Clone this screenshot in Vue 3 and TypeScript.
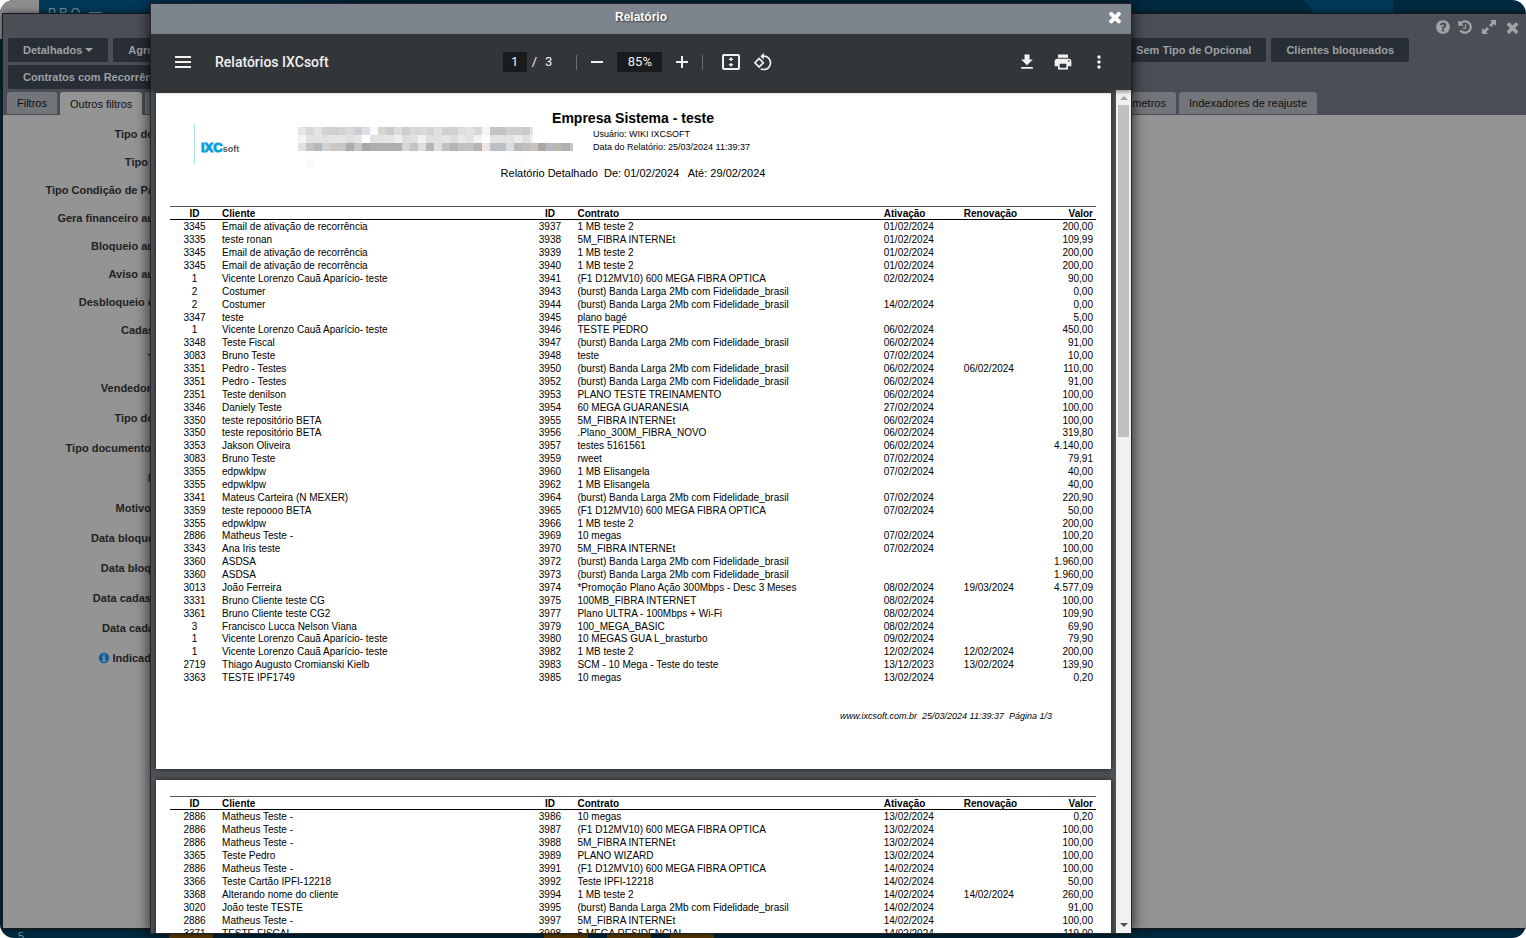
<script setup lang="ts">
type Row = [string, string, string, string, string, string, string]

const columns = ['ID', 'Cliente', 'ID', 'Contrato', 'Ativação', 'Renovação', 'Valor']

const burst = '(burst) Banda Larga 2Mb com Fidelidade_brasil'
const mega = '(F1 D12MV10) 600 MEGA FIBRA OPTICA'
const vicente = 'Vicente Lorenzo Cauã Aparício- teste'
const email = 'Email de ativação de recorrência'

const firstPage: Row[] = [
  ['3345', email, '3937', '1 MB teste 2', '01/02/2024', '', '200,00'],
  ['3335', 'teste ronan', '3938', '5M_FIBRA INTERNEt', '01/02/2024', '', '109,99'],
  ['3345', email, '3939', '1 MB teste 2', '01/02/2024', '', '200,00'],
  ['3345', email, '3940', '1 MB teste 2', '01/02/2024', '', '200,00'],
  ['1', vicente, '3941', mega, '02/02/2024', '', '90,00'],
  ['2', 'Costumer', '3943', burst, '', '', '0,00'],
  ['2', 'Costumer', '3944', burst, '14/02/2024', '', '0,00'],
  ['3347', 'teste', '3945', 'plano bagé', '', '', '5,00'],
  ['1', vicente, '3946', 'TESTE PEDRO', '06/02/2024', '', '450,00'],
  ['3348', 'Teste Fiscal', '3947', burst, '06/02/2024', '', '91,00'],
  ['3083', 'Bruno Teste', '3948', 'teste', '07/02/2024', '', '10,00'],
  ['3351', 'Pedro - Testes', '3950', burst, '06/02/2024', '06/02/2024', '110,00'],
  ['3351', 'Pedro - Testes', '3952', burst, '06/02/2024', '', '91,00'],
  ['2351', 'Teste denilson', '3953', 'PLANO TESTE TREINAMENTO', '06/02/2024', '', '100,00'],
  ['3346', 'Daniely Teste', '3954', '60 MEGA GUARANÉSIA', '27/02/2024', '', '100,00'],
  ['3350', 'teste repositório BETA', '3955', '5M_FIBRA INTERNEt', '06/02/2024', '', '100,00'],
  ['3350', 'teste repositório BETA', '3956', '.Plano_300M_FIBRA_NOVO', '06/02/2024', '', '319,80'],
  ['3353', 'Jakson Oliveira', '3957', 'testes 5161561', '06/02/2024', '', '4.140,00'],
  ['3083', 'Bruno Teste', '3959', 'rweet', '07/02/2024', '', '79,91'],
  ['3355', 'edpwklpw', '3960', '1 MB Elisangela', '07/02/2024', '', '40,00'],
  ['3355', 'edpwklpw', '3962', '1 MB Elisangela', '', '', '40,00'],
  ['3341', 'Mateus Carteira (N MEXER)', '3964', burst, '07/02/2024', '', '220,90'],
  ['3359', 'teste repoooo BETA', '3965', mega, '07/02/2024', '', '50,00'],
  ['3355', 'edpwklpw', '3966', '1 MB teste 2', '', '', '200,00'],
  ['2886', 'Matheus Teste -', '3969', '10 megas', '07/02/2024', '', '100,20'],
  ['3343', 'Ana Iris teste', '3970', '5M_FIBRA INTERNEt', '07/02/2024', '', '100,00'],
  ['3360', 'ASDSA', '3972', burst, '', '', '1.960,00'],
  ['3360', 'ASDSA', '3973', burst, '', '', '1.960,00'],
  ['3013', 'João Ferreira', '3974', '*Promoção Plano Ação 300Mbps - Desc 3 Meses', '08/02/2024', '19/03/2024', '4.577,09'],
  ['3331', 'Bruno Cliente teste CG', '3975', '100MB_FIBRA INTERNET', '08/02/2024', '', '100,00'],
  ['3361', 'Bruno Cliente teste CG2', '3977', 'Plano ULTRA - 100Mbps + Wi-Fi', '08/02/2024', '', '109,90'],
  ['3', 'Francisco Lucca Nelson Viana', '3979', '100_MEGA_BASIC', '08/02/2024', '', '69,90'],
  ['1', vicente, '3980', '10 MEGAS GUA L_brasturbo', '09/02/2024', '', '79,90'],
  ['1', vicente, '3982', '1 MB teste 2', '12/02/2024', '12/02/2024', '200,00'],
  ['2719', 'Thiago Augusto Cromianski Kielb', '3983', 'SCM - 10 Mega - Teste do teste', '13/12/2023', '13/02/2024', '139,90'],
  ['3363', 'TESTE IPF1749', '3985', '10 megas', '13/02/2024', '', '0,20'],
]

const secondPage: Row[] = [
  ['2886', 'Matheus Teste -', '3986', '10 megas', '13/02/2024', '', '0,20'],
  ['2886', 'Matheus Teste -', '3987', mega, '13/02/2024', '', '100,00'],
  ['2886', 'Matheus Teste -', '3988', '5M_FIBRA INTERNEt', '13/02/2024', '', '100,00'],
  ['3365', 'Teste Pedro', '3989', 'PLANO WIZARD', '13/02/2024', '', '100,00'],
  ['2886', 'Matheus Teste -', '3991', mega, '14/02/2024', '', '100,00'],
  ['3366', 'Teste Cartão IPFI-12218', '3992', 'Teste IPFI-12218', '14/02/2024', '', '50,00'],
  ['3368', 'Alterando nome do cliente', '3994', '1 MB teste 2', '14/02/2024', '14/02/2024', '260,00'],
  ['3020', 'João teste TESTE', '3995', burst, '14/02/2024', '', '91,00'],
  ['2886', 'Matheus Teste -', '3997', '5M_FIBRA INTERNEt', '14/02/2024', '', '100,00'],
  ['3371', 'TESTE FISCAL', '3998', '5 MEGA RESIDENCIAL', '14/02/2024', '', '119,00'],
]

const sheets = [
  { key: 'p1', rows: firstPage, first: true },
  { key: 'p2', rows: secondPage, first: false },
]

const compactLabels = ['Tipo do', 'Tipo\u00a0\u00a0', 'Tipo Condição de Pa', 'Gera financeiro au', 'Bloqueio au', 'Aviso au', 'Desbloqueio e', 'Cadas', 'T']
const wideLabels = ['Vendedor\u00a0', 'Tipo do', 'Tipo documento\u00a0', 'I\u00a0', 'Motivo\u00a0', 'Data bloque', 'Data bloq\u00a0', 'Data cadas\u00a0', 'Data cada']

const censored: string[][] = [
  'e6e4e4 d6d6d6 e0e4e7 d2d0d0 cfcfcf d3d3d5 d9dadc cecece dce0e6 f7f9fb d8d4d2 c9cacf e0dedd cbccce d8d8d6 d6d9dd d3d3d3 e0e0e2 d0d0d0 d0d0d0 dcdee2 e5e3e2 d6d8da f4f6fa c4c4c4 c2c4c4 cfcfcd cccccc cacaca e0e3e7'.split(' '),
  'f5f5f5 e4e2e2 e0e2e4 e0e0de e4e4e4 e6e6e8 dedfe1 e6e6e6 ffffff e2e2e2 e6e4e4 e4e6e6 eceeee dcdcda e0e2e2 f1f3f3 e0dfde e2e2e2 e4e4e4 dededc e8e8e8 e2e2e4 f0f2f6 fcfdff e4e2e2 e2e2e2 e2e4e4 ececec e0e0e0 eef0f3'.split(' '),
  'e2e0e0 c4c2c0 b4b6b8 ced2d6 cdc6c2 c4c6c8 abacae c6c6c8 a8a8a8 aeaeb0 b0b0b0 b0b0b4 b0b0b2 d4d6d6 c4c4c0 e0dedc b4b6ba e2dedd c0c0c0 b2b2b2 c0c0c2 c2c2be b4b4b4 ede4e2 bcc0c4 bec0c2 d8dee0 b8b8b8 bebebe c6c2c0 aaa6a4 b4b8c0 b8b4ae acb0b4 c4c6c6'.split(' '),
]

const timesPath = 'M1490 1322q0 40-28 68l-136 136q-28 28-68 28t-68-28l-294-294-294 294q-28 28-68 28t-68-28l-136-136q-28-28-28-68t28-68l294-294-294-294q-28-28-28-68t28-68l136-136q28-28 68-28t68 28l294 294 294-294q28-28 68-28t68 28l136 136q28 28 28 68t-28 68l-294 294 294 294q28 28 28 68z'
const disc = 'q0 209-103 385.5t-279.5 279.5-385.5 103-385.5-103-279.5-279.5-103-385.5 103-385.5 279.5-279.5 385.5-103 385.5 103 279.5 279.5 103 385.5z'
const helpPath = 'M1024 1376v-192q0-14-9-23t-23-9h-192q-14 0-23 9t-9 23v192q0 14 9 23t23 9h192q14 0 23-9t9-23zm256-672q0-88-55.5-163t-138.5-116-170-41q-243 0-371 213-15 24 8 42l132 100q7 6 19 6 16 0 25-12 53-68 86-92 34-24 86-24 48 0 85.5 26t37.5 59q0 38-20 61t-68 45q-63 28-115.5 86.5t-52.5 125.5v36q0 14 9 23t23 9h192q14 0 23-9t9-23q0-19 21.5-49.5t54.5-49.5q32-18 49-28.5t46-35 44.5-48 28-60.5 12.5-81zm384 192' + disc
const infoPath = 'M1152 1376v-160q0-14-9-23t-23-9h-96v-512q0-14-9-23t-23-9h-320q-14 0-23 9t-9 23v160q0 14 9 23t23 9h96v320h-96q-14 0-23 9t-9 23v160q0 14 9 23t23 9h448q14 0 23-9t9-23zm-128-896v-160q0-14-9-23t-23-9h-192q-14 0-23 9t-9 23v160q0 14 9 23t23 9h192q14 0 23-9t9-23zm640 416' + disc
const historyPath = 'M1664 896q0 156-61 298t-164 245-245 164-298 61q-172 0-327-72.5t-264-204.5q-7-10-6.5-22.5t8.5-20.5l137-138q10-9 25-9 16 2 23 12 73 95 179 147t225 52q104 0 198.5-40.5t163.5-109.5 109.5-163.5 40.5-198.5-40.5-198.5-109.5-163.5-163.5-109.5-198.5-40.5q-98 0-188 35.5t-160 101.5l137 138q31 30 14 69-17 40-59 40h-448q-26 0-45-19t-19-45v-448q0-42 40-59 39-17 69 14l130 129q107-101 244.5-156.5t284.5-55.5q156 0 298 61t245 164 164 245 61 298zm-640-288v448q0 14-9 23t-23 9h-320q-14 0-23-9t-9-23v-64q0-14 9-23t23-9h224v-352q0-14 9-23t23-9h64q14 0 23 9t9 23z'
</script>

<template>
  <div class="desktop">
    <div class="corner"></div>
    <div class="brand">PRO <i></i></div>
    <div class="swoosh"></div>
    <div class="dock" aria-hidden="true">
      <span class="tick">5</span>
      <i class="bar bar-a"></i><i class="bar bar-b"></i><i class="bar bar-c"></i><i class="bar bar-d"></i>
      <span class="year">2000</span>
    </div>

    <section class="window">
      <header class="window-head">
        <div class="window-tools">
          <button class="tool" aria-label="Ajuda"><svg width="16" height="16" viewBox="0 0 1792 1792"><path :d="helpPath" /></svg></button>
          <button class="tool" aria-label="Histórico"><svg width="16" height="16" viewBox="0 0 1792 1792"><path :d="historyPath" /></svg></button>
          <button class="tool expand" aria-label="Expandir"><svg width="16" height="16" viewBox="0 0 16 16"><path d="M9 1h6v6l-2-2-3 3-2-2 3-3zM1 9l2 2 3-3 2 2-3 3 2 2H1z" /></svg></button>
          <button class="tool" aria-label="Fechar"><svg width="17" height="17" viewBox="0 0 1792 1792"><path :d="timesPath" /></svg></button>
        </div>
        <div class="actions">
          <div class="group near-actions">
            <button class="action">Detalhados <i class="caret"></i></button>
            <button class="action">Agru</button>
          </div>
          <div class="group far-actions">
            <button class="action">Sem Tipo de Opcional</button>
            <button class="action">Clientes bloqueados</button>
          </div>
        </div>
        <div class="actions near-actions">
          <button class="action">Contratos com Recorrên</button>
        </div>
        <nav class="tabs">
          <div class="group tab-group">
            <button class="tab">Filtros</button>
            <button class="tab active">Outros filtros</button>
            <button class="tab blank" aria-label="Aba"></button>
          </div>
          <div class="group tab-group far-tabs">
            <button class="tab">metros</button>
            <button class="tab">Indexadores de reajuste</button>
          </div>
        </nav>
      </header>
      <div class="window-body">
        <ul class="labels">
          <li v-for="(label, i) in compactLabels" :key="'c' + i">{{ label }}</li>
        </ul>
        <ul class="labels wide">
          <li v-for="(label, i) in wideLabels" :key="'w' + i">{{ label }}</li>
          <li><svg class="info" width="12" height="12" viewBox="0 0 1792 1792"><path :d="infoPath" /></svg>Indicad&nbsp;</li>
        </ul>
      </div>
    </section>

    <section class="modal" role="dialog" aria-labelledby="modal-title">
      <header class="modal-head">
        <h1 id="modal-title">Relatório</h1>
        <button class="modal-close" aria-label="Fechar relatório"><svg width="18" height="18" viewBox="0 0 1792 1792"><path :d="timesPath" /></svg></button>
      </header>

      <div class="toolbar">
        <div class="tb-left">
          <button class="tb" aria-label="Menu"><svg width="16" height="12" viewBox="0 0 16 12"><path d="M0 0h16v2H0zM0 5h16v2H0zM0 10h16v2H0z" /></svg></button>
          <span class="doc-name">Relatórios IXCsoft</span>
        </div>
        <div class="tb-center">
          <input class="page-box" type="text" value="1" aria-label="Página" />
          <span class="slash">/</span><span class="total">3</span>
          <i class="sep"></i>
          <button class="tb" aria-label="Diminuir zoom"><svg width="12" height="12" viewBox="0 0 12 12"><path d="M0 5h12v2H0z" /></svg></button>
          <input class="zoom-box" type="text" value="85%" aria-label="Zoom" />
          <button class="tb" aria-label="Aumentar zoom"><svg width="12" height="12" viewBox="0 0 12 12"><path d="M5 0h2v5h5v2H7v5H5V7H0V5h5z" /></svg></button>
          <i class="sep near"></i>
          <button class="tb fit" aria-label="Ajustar à página"><svg width="18" height="16" viewBox="0 0 18 16"><path fill-rule="evenodd" d="M2 0h14a2 2 0 0 1 2 2v12a2 2 0 0 1-2 2H2a2 2 0 0 1-2-2V2a2 2 0 0 1 2-2zM2 2v12h14V2zM9 3l2.500 3h-5zM9 13l-2.500-3h5zM8.300 6h1.400v1H8.300zM8.300 9h1.400v1H8.300z" /></svg></button>
          <button class="tb" aria-label="Girar"><svg width="20" height="20" viewBox="0 0 24 24"><path d="M7.34 6.41L.86 12.9l6.49 6.48 6.49-6.48-6.5-6.49zM3.69 12.9l3.66-3.66L11 12.9l-3.66 3.66-3.65-3.66zm15.67-6.26C17.61 4.88 15.3 4 13 4V.76L8.76 5 13 9.24V6c1.79 0 3.58.68 4.95 2.05 2.73 2.73 2.73 7.17 0 9.9C16.58 19.32 14.79 20 13 20c-.97 0-1.94-.21-2.84-.61l-1.49 1.49C10.02 21.62 11.51 22 13 22c2.3 0 4.61-.88 6.36-2.64 3.52-3.51 3.52-9.21 0-12.72z" /></svg></button>
        </div>
        <div class="tb-right">
          <button class="tb" aria-label="Baixar"><svg width="20" height="20" viewBox="0 0 24 24"><path d="M19 9h-4V3H9v6H5l7 7 7-7zM5 18v2h14v-2H5z" /></svg></button>
          <button class="tb" aria-label="Imprimir"><svg width="20" height="20" viewBox="0 0 24 24"><path d="M19 8H5c-1.66 0-3 1.34-3 3v6h4v4h12v-4h4v-6c0-1.66-1.34-3-3-3zm-3 11H8v-5h8v5zm3-7c-.55 0-1-.45-1-1s.45-1 1-1 1 .45 1 1-.45 1-1 1zm-1-9H6v4h12V3z" /></svg></button>
          <button class="tb" aria-label="Mais opções"><svg width="20" height="20" viewBox="0 0 24 24"><path d="M12 8c1.1 0 2-.9 2-2s-.9-2-2-2-2 .9-2 2 .9 2 2 2zm0 2c-1.1 0-2 .9-2 2s.9 2 2 2 2-.9 2-2-.9-2-2-2zm0 6c-1.1 0-2 .9-2 2s.9 2 2 2 2-.9 2-2-.9-2-2-2z" /></svg></button>
        </div>
      </div>

      <div class="viewer">
        <div class="pages">
          <article v-for="sheet in sheets" :key="sheet.key" class="sheet" :class="{ first: sheet.first }">
            <header v-if="sheet.first" class="report-head">
              <h2>Empresa Sistema - teste</h2>
              <div class="logo"><b>IXC</b><span>soft</span></div>
              <svg class="mosaic" width="275" height="40" viewBox="0 0 275 40" shape-rendering="crispEdges">
                <template v-for="(line, y) in censored" :key="y">
                  <rect v-for="(c, x) in line" :key="x" :x="x * 8" :y="y * 8" :width="x === 29 && y < 2 ? 3 : 8" height="8" :fill="'#' + c" />
                </template>
                <rect x="8" y="32" width="8" height="8" fill="#f8f8f8" />
                <rect x="210" y="32" width="16" height="8" fill="#fbfbfb" />
              </svg>
              <div class="meta">
                <div>Usuário: WIKI IXCSOFT</div>
                <div>Data do Relatório: 25/03/2024 11:39:37</div>
              </div>
              <p class="period">Relatório Detalhado&nbsp; De: 01/02/2024&nbsp;&nbsp; Até: 29/02/2024</p>
            </header>
            <table :class="sheet.first ? 'full' : 'partial'">
              <colgroup>
                <col class="c-id" /><col class="c-client" /><col class="c-id" /><col class="c-contract" />
                <col class="c-date" /><col class="c-date" /><col class="c-value" />
              </colgroup>
              <thead>
                <tr><th v-for="(name, i) in columns" :key="i" scope="col">{{ name }}</th></tr>
              </thead>
              <tbody>
                <tr v-for="row in sheet.rows" :key="row[2]">
                  <td v-for="(cell, i) in row" :key="i">{{ cell }}</td>
                </tr>
              </tbody>
            </table>
            <footer v-if="sheet.first" class="report-foot">www.ixcsoft.com.br&nbsp; 25/03/2024 11:39:37&nbsp; Página 1/3</footer>
          </article>
        </div>
        <div class="scrollbar" aria-hidden="true">
          <i class="arrow up"></i>
          <i class="thumb"></i>
          <i class="arrow down"></i>
        </div>
      </div>
    </section>
  </div>
</template>

<style>
body {
  margin: 0;
  background: #fff;
}
</style>

<style scoped>
* {
  box-sizing: border-box;
}
button,
input {
  font: inherit;
  color: inherit;
  border: 0;
  margin: 0;
  padding: 0;
  background: none;
}
svg {
  display: block;
  fill: currentColor;
}
.desktop {
  position: relative;
  height: 100vh;
  overflow: hidden;
  border-radius: 14px;
  background: #002a3f;
  font-family: "Liberation Sans", Arial, sans-serif;
  font-size: 11px;
}
.corner {
  position: absolute;
  left: 0;
  top: 0;
  width: 39px;
  height: 39px;
  background: #8e8e8e;
}
.brand {
  position: absolute;
  left: 39px;
  top: 0;
  width: 500px;
  height: 39px;
  padding: 6px 9px;
  background: linear-gradient(90deg, #003a5a 20%, #002a3f 80%);
  color: #7890a0;
  font-size: 12px;
  letter-spacing: 3px;
}
.brand i {
  display: inline-block;
  width: 13px;
  height: 1px;
  margin-bottom: 4px;
  background: currentColor;
}
.swoosh {
  position: absolute;
  right: 133px;
  top: 0;
  width: 90px;
  height: 30px;
  background: #003a59;
  clip-path: polygon(0 0, 100% 0, 100% 100%, 16% 100%, 10% 30%);
}
.dock {
  position: absolute;
  left: 0;
  right: 0;
  bottom: 0;
  height: 10px;
  overflow: hidden;
  color: #7d8b93;
  font-size: 11px;
}
.tick,
.year {
  position: absolute;
  left: 18px;
  top: 2px;
}
.year {
  left: 784px;
  top: -4px;
}
.bar {
  position: absolute;
  top: 0;
  width: 44px;
  height: 10px;
  background: #6b4608;
}
.bar-a { left: 169px; }
.bar-b { left: 544px; }
.bar-c { left: 607px; }
.bar-d { left: 670px; }

.window {
  position: absolute;
  inset: 13px 0 9px 2px;
  display: flex;
  flex-direction: column;
  border: 1px solid #16181a;
  border-right: 0;
  background: #949494;
  box-shadow: 0 0 8px rgba(0, 0, 0, 0.5);
}
.window-head {
  position: relative;
  padding: 24px 0 0 5px;
  background: #4b4e56;
}
.window-tools {
  position: absolute;
  right: 5px;
  top: 5px;
  display: flex;
  align-items: center;
  gap: 6px;
  height: 16px;
  color: #a2a3a5;
}
.expand {
  margin: 0 1px 0 2px;
}
.tool {
  display: flex;
}
.actions {
  display: flex;
  justify-content: space-between;
  margin-bottom: 3px;
}
.actions .action {
  height: 24px;
  padding: 0 15px;
  border-radius: 2px;
  background: #282e35;
  color: #9fa0a1;
  font-weight: bold;
  line-height: 24px;
  white-space: nowrap;
}
.near-actions .action {
  padding-bottom: 1px;
  line-height: 22px;
}
.group {
  display: flex;
  gap: 5px;
}
.far-actions {
  margin-right: 117px;
}
.caret {
  display: inline-block;
  border: 4px solid transparent;
  border-top-color: currentColor;
  border-bottom: 0;
  margin-bottom: 2px;
}
.tabs {
  display: flex;
  justify-content: space-between;
  margin: 3px 0 0 -1px;
  height: 23px;
}
.tab-group {
  gap: 3px;
}
.far-tabs {
  margin-right: 209px;
}
.tab {
  height: 22px;
  padding: 0 10px;
  border-radius: 3px 3px 0 0;
  background: #72767a;
  color: #101112;
  line-height: 22px;
}
.tab.active {
  height: 23px;
  background: #949494;
}
.tab.blank {
  width: 40px;
}
.window-body {
  flex: 1;
  padding-top: 5px;
}
.labels {
  width: 151px;
  margin: 0;
  padding: 0;
  list-style: none;
  color: #222;
  font-weight: bold;
}
.labels li {
  display: flex;
  align-items: center;
  justify-content: flex-end;
  height: 28px;
  white-space: nowrap;
}
.labels.wide {
  margin-top: 1px;
}
.labels.wide li {
  height: 30px;
}
.info {
  margin-right: 2px;
  color: #0f5fa0;
}

.modal {
  position: absolute;
  inset: 3px 394px 4px 150px;
  display: flex;
  flex-direction: column;
  border: 1px solid #22262a;
  background: #525659;
  box-shadow: 0 0 14px rgba(0, 0, 0, 0.8);
}
.modal-head {
  position: relative;
  flex: none;
  height: 30px;
  background: #7c858e;
  color: #fff;
}
.modal-head h1 {
  margin: 0;
  font-size: 12px;
  line-height: 26px;
  text-align: center;
  text-shadow: 1px 1px 2px rgba(0, 0, 0, 0.6);
}
.modal-close {
  position: absolute;
  right: 7px;
  top: 4px;
}
.toolbar {
  position: relative;
  z-index: 1;
  flex: none;
  display: grid;
  grid-template-columns: 1fr auto 1fr;
  align-items: center;
  height: 56px;
  padding: 0 20px 0 22px;
  background: #323639;
  color: #f1f1f1;
  font-family: Roboto, sans-serif;
  font-size: 14px;
  line-height: 20px;
  box-shadow: 0 2px 4px rgba(0, 0, 0, 0.4);
}
.tb {
  display: flex;
  align-items: center;
  justify-content: center;
  width: 20px;
  height: 20px;
}
.tb-left,
.tb-center,
.tb-right {
  display: flex;
  align-items: center;
}
.doc-name {
  margin-left: 22px;
  font-weight: 500;
}
.tb-center {
  padding-right: 8px;
  font-size: 13px;
}
.page-box,
.zoom-box {
  height: 20px;
  background: #191b1c;
  text-align: center;
}
.page-box {
  width: 24px;
}
.zoom-box {
  width: 45px;
  margin: 0 10px;
}
.slash {
  margin: 0 8px 0 5px;
}
.sep {
  width: 1px;
  height: 15px;
  margin: 0 10px 0 24px;
  background: #6c6f71;
}
.sep.near {
  margin: 0 18px 0 10px;
}
.fit {
  margin-right: 12px;
}
.tb-right {
  justify-content: flex-end;
  gap: 16px;
  padding-right: 2px;
}
.viewer {
  flex: 1;
  min-height: 0;
  display: flex;
}
.pages {
  flex: 1;
  min-width: 0;
  overflow: hidden;
  padding: 3px 5px 0;
}
.sheet {
  margin-bottom: 11px;
  padding: 16px 15px 16px 14px;
  background: #fff;
  color: #000;
  box-shadow: 0 0 7px rgba(0, 0, 0, 0.65);
}
.sheet.first {
  padding-top: 15px;
  padding-bottom: 46px;
}
.report-head {
  display: grid;
  grid-template-columns: 128px 295px 1fr;
  grid-template-rows: 19px 40px 13px;
  height: 98px;
}
.report-head h2 {
  grid-area: 1 / 1 / 2 / 4;
  margin: 0;
  font-size: 14px;
  line-height: 20px;
  text-align: center;
}
.logo {
  grid-area: 1 / 1 / 3 / 2;
  align-self: end;
  display: flex;
  align-items: baseline;
  height: 40px;
  margin: 0 0 3px 24px;
  padding: 16px 0 0 6px;
  border-left: 1px solid #a9ddf0;
  line-height: 16px;
}
.logo b {
  color: #0c9cda;
  font-size: 13px;
  -webkit-text-stroke: 1px #0c9cda;
}
.logo span {
  color: #555;
  font-size: 9px;
  font-weight: bold;
}
.mosaic {
  grid-area: 2 / 2 / 3 / 3;
}
.meta {
  grid-area: 2 / 3 / 3 / 4;
  padding-top: 1px;
  font-size: 9px;
  line-height: 13px;
}
.period {
  grid-area: 3 / 1 / 4 / 4;
  margin: 0;
  line-height: 13px;
  text-align: center;
}
table {
  width: 100%;
  table-layout: fixed;
  border-spacing: 0;
  font-size: 10px;
  line-height: 10px;
}
table.full {
  height: 478px;
}
table.partial {
  height: 143px;
}
.c-id { width: 49px; }
.c-client { width: 306px; }
.c-contract { width: 306px; }
.c-date { width: 80px; }
.c-value { width: 55px; }
th,
td {
  padding: 2px 3px 0;
  text-align: left;
  white-space: nowrap;
}
thead tr {
  height: 14px;
}
th {
  border-top: 1px solid #555;
  border-bottom: 1px solid #000;
}
th:nth-child(1),
th:nth-child(3),
td:nth-child(1),
td:nth-child(3) {
  text-align: center;
}
th:last-child,
td:last-child {
  text-align: right;
}
.report-foot {
  padding: 25px 44px 0 0;
  font-size: 9px;
  font-style: italic;
  line-height: 14px;
  text-align: right;
}
.scrollbar {
  flex: none;
  display: flex;
  flex-direction: column;
  align-items: center;
  width: 15px;
  padding: 6px 0;
  background: #f1f1f1;
}
.arrow {
  border: 4px solid transparent;
}
.arrow.up {
  border-top: 0;
  border-bottom-color: #a3a3a3;
}
.thumb {
  width: 11px;
  height: 40%;
  margin: 5px 0 auto;
  background: #c1c1c1;
}
.arrow.down {
  border-bottom: 0;
  border-top-color: #505050;
}
</style>
